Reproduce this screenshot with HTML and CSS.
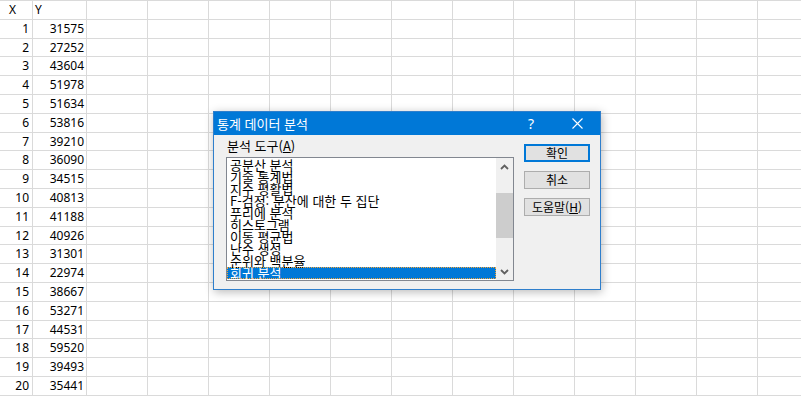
FILE: index.html
```html
<!DOCTYPE html>
<html lang="ko">
<head>
<meta charset="utf-8">
<title>통계 데이터 분석</title>
<link rel="stylesheet" href="styles.css">
</head>
<body>
<div class="sheet">
  <div class="row"><div class="c a head">X</div><div class="c b head">Y</div><div class="rest"></div></div>
  <div class="row"><div class="c a">1</div><div class="c b">31575</div><div class="rest"></div></div>
  <div class="row"><div class="c a">2</div><div class="c b">27252</div><div class="rest"></div></div>
  <div class="row"><div class="c a">3</div><div class="c b">43604</div><div class="rest"></div></div>
  <div class="row"><div class="c a">4</div><div class="c b">51978</div><div class="rest"></div></div>
  <div class="row"><div class="c a">5</div><div class="c b">51634</div><div class="rest"></div></div>
  <div class="row"><div class="c a">6</div><div class="c b">53816</div><div class="rest"></div></div>
  <div class="row"><div class="c a">7</div><div class="c b">39210</div><div class="rest"></div></div>
  <div class="row"><div class="c a">8</div><div class="c b">36090</div><div class="rest"></div></div>
  <div class="row"><div class="c a">9</div><div class="c b">34515</div><div class="rest"></div></div>
  <div class="row"><div class="c a">10</div><div class="c b">40813</div><div class="rest"></div></div>
  <div class="row"><div class="c a">11</div><div class="c b">41188</div><div class="rest"></div></div>
  <div class="row"><div class="c a">12</div><div class="c b">40926</div><div class="rest"></div></div>
  <div class="row"><div class="c a">13</div><div class="c b">31301</div><div class="rest"></div></div>
  <div class="row"><div class="c a">14</div><div class="c b">22974</div><div class="rest"></div></div>
  <div class="row"><div class="c a">15</div><div class="c b">38667</div><div class="rest"></div></div>
  <div class="row"><div class="c a">16</div><div class="c b">53271</div><div class="rest"></div></div>
  <div class="row"><div class="c a">17</div><div class="c b">44531</div><div class="rest"></div></div>
  <div class="row"><div class="c a">18</div><div class="c b">59520</div><div class="rest"></div></div>
  <div class="row"><div class="c a">19</div><div class="c b">39493</div><div class="rest"></div></div>
  <div class="row"><div class="c a">20</div><div class="c b">35441</div><div class="rest"></div></div>
</div>

<div class="dialog">
  <div class="titlebar">
    <div class="title">통계 데이터 분석</div>
    <div class="tbtn help">?</div>
    <div class="tbtn close">
      <svg width="11" height="11" viewBox="0 0 11 11"><path d="M0.5 0.5 L10.5 10.5 M10.5 0.5 L0.5 10.5" stroke="#fff" stroke-width="1.1" fill="none"/></svg>
    </div>
  </div>
  <div class="body">
    <div class="left">
      <div class="label">분석 도구(<u>A</u>)</div>
      <div class="listbox">
        <div class="items">
          <div class="item">공분산 분석</div>
          <div class="item">기술 통계법</div>
          <div class="item">지수 평활법</div>
          <div class="item">F-검정: 분산에 대한 두 집단</div>
          <div class="item">푸리에 분석</div>
          <div class="item">히스토그램</div>
          <div class="item">이동 평균법</div>
          <div class="item">난수 생성</div>
          <div class="item">순위와 백분율</div>
          <div class="item sel">회귀 분석</div>
        </div>
        <div class="scroll">
          <div class="arrow">
            <svg width="9" height="6" viewBox="0 0 9 6"><path d="M1 5 L4.5 1.5 L8 5" stroke="#606060" stroke-width="1.8" fill="none"/></svg>
          </div>
          <div class="track"><div class="thumb"></div></div>
          <div class="arrow">
            <svg width="9" height="6" viewBox="0 0 9 6"><path d="M1 1 L4.5 4.5 L8 1" stroke="#606060" stroke-width="1.8" fill="none"/></svg>
          </div>
        </div>
      </div>
    </div>
    <div class="buttons">
      <div class="btn default">확인</div>
      <div class="btn">취소</div>
      <div class="btn">도움말(<u>H</u>)</div>
    </div>
  </div>
</div>
</body>
</html>
```
FILE: styles.css
```css
html, body {
  margin: 0;
  padding: 0;
  background: #fff;
  overflow: hidden;
}

body {
  width: 801px;
  height: 400px;
  position: relative;
  font-family: "Noto Sans", "Noto Sans CJK KR", sans-serif;
}

.sheet {
  border-top: 1px solid #dadada;
  width: 830px;
}

.row {
  display: flex;
  height: 18.8px;
  box-sizing: border-box;
  border-bottom: 1px solid #dadada;
}

.c {
  box-sizing: border-box;
  border-right: 1px solid #dadada;
  font-size: 12px;
  line-height: 18px;
  color: #000;
  text-align: right;
  white-space: nowrap;
}

.a {
  width: 33px;
  padding-right: 3px;
}

.b {
  width: 54px;
  padding-right: 2px;
}

.a.head {
  text-align: left;
  padding-left: 9px;
}

.b.head {
  text-align: left;
  padding-left: 2px;
}

.rest {
  flex: 1;
  background-image: linear-gradient(to right, transparent 60px, #dadada 60px);
  background-size: 61px 100%;
  background-repeat: repeat-x;
}

/* dialog */
.dialog {
  position: absolute;
  left: 213px;
  top: 111px;
  width: 388px;
  height: 179px;
  box-sizing: border-box;
  border: 1px solid #2f7fcc;
  background: #f0f0f0;
  box-shadow: 1px 2px 9px rgba(0, 0, 0, 0.28);
  font-family: "Noto Sans CJK KR", "Noto Sans", sans-serif;
}

.titlebar {
  height: 23px;
  background: #0078d7;
  display: flex;
  align-items: center;
  color: #fff;
}

.title {
  flex: 1;
  padding-left: 3px;
  font-size: 13px;
  line-height: 23px;
}

.tbtn {
  width: 46px;
  height: 23px;
  display: flex;
  align-items: center;
  justify-content: center;
}

.help {
  font-family: "Noto Sans", sans-serif;
  font-size: 14px;
  line-height: 23px;
}

.body {
  display: flex;
  padding: 4px 10px 0 12px;
  gap: 10px;
}

.left {
  display: flex;
  flex-direction: column;
}

.label {
  font-size: 13px;
  line-height: 13px;
  height: 13px;
  margin-bottom: 5px;
  padding-left: 1px;
  color: #000;
}

.listbox {
  width: 288px;
  height: 124px;
  box-sizing: border-box;
  border: 1px solid #828790;
  background: #fff;
  display: flex;
}

.items {
  width: 269px;
  padding-top: 1px;
  overflow: hidden;
}

.item {
  height: 12px;
  line-height: 12px;
  font-size: 13px;
  padding-left: 3px;
  white-space: nowrap;
  color: #000;
}

.item.sel {
  background: #0078d7;
  color: #fff;
  outline: 1px dotted #f3a53a;
  outline-offset: -1px;
}

.scroll {
  width: 17px;
  background: #f0f0f0;
  display: flex;
  flex-direction: column;
}

.arrow {
  height: 17px;
  display: flex;
  align-items: center;
  justify-content: center;
}

.track {
  flex: 1;
  padding-top: 18px;
}

.thumb {
  height: 45px;
  background: #cdcdcd;
}

.buttons {
  display: flex;
  flex-direction: column;
  gap: 9px;
  margin-top: 5px;
}

.btn {
  width: 66px;
  height: 18px;
  box-sizing: border-box;
  border: 1px solid #adadad;
  background: #e1e1e1;
  font-size: 12px;
  line-height: 16px;
  text-align: center;
  color: #000;
}

.btn.default {
  border: 2px solid #0078d7;
  line-height: 14px;
}
```
